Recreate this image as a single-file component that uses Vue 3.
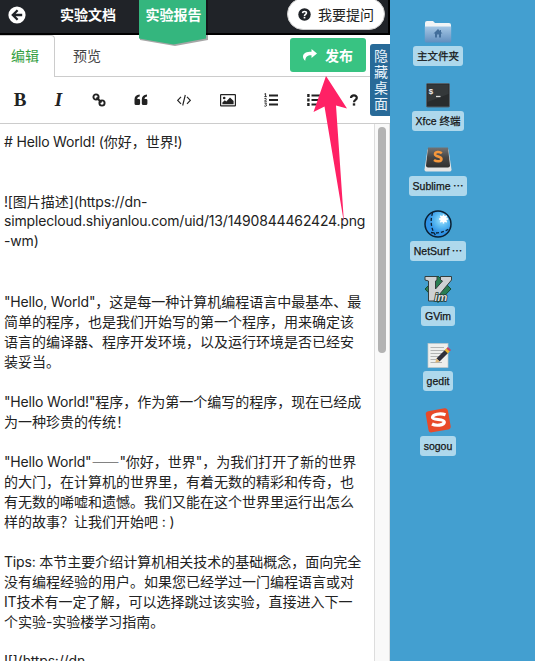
<script setup>
const lines = [
  { t: '# Hello World! (你好，世界!)' },
  { t: '' },
  { t: '' },
  { t: '![图片描述](https://dn-' },
  { t: 'simplecloud.shiyanlou.com/uid/13/1490844462424.png' },
  { t: '-wm)' },
  { t: '' },
  { t: '' },
  { t: '"Hello, World"，这是每一种计算机编程语言中最基本、最' },
  { t: '简单的程序，也是我们开始写的第一个程序，用来确定该' },
  { t: '语言的编译器、程序开发环境，以及运行环境是否已经安' },
  { t: '装妥当。' },
  { t: '' },
  { t: '"Hello World!"程序，作为第一个编写的程序，现在已经成' },
  { t: '为一种珍贵的传统！' },
  { t: '' },
  { t: '"Hello World"——"你好，世界"，为我们打开了新的世界' },
  { t: '的大门，在计算机的世界里，有着无数的精彩和传奇，也' },
  { t: '有无数的唏嘘和遗憾。我们又能在这个世界里运行出怎么' },
  { t: '样的故事？让我们开始吧 : )' },
  { t: '' },
  { t: 'Tips: 本节主要介绍计算机相关技术的基础概念，面向完全' },
  { t: '没有编程经验的用户。如果您已经学过一门编程语言或对' },
  { t: 'IT技术有一定了解，可以选择跳过该实验，直接进入下一' },
  { t: '个实验-实验楼学习指南。' },
  { t: '' },
  { t: '![](https://dn-' },
]
// Latin and CJK runs are tracked separately
for (const l of lines) {
  l.runs = l.t.match(/[\x00-\x7f]+|—+|[^\x00-\x7f—]+/g) || []
}
const runClass = (s) => (s.charCodeAt(0) < 128 ? 'en' : s[0] === '—' ? 'dash' : 'zh')
const apps = [
  { id: 'folder', label: '主文件夹' },
  { id: 'term', label: 'Xfce 终端' },
  { id: 'sublime', label: 'Sublime', more: true },
  { id: 'netsurf', label: 'NetSurf', more: true },
  { id: 'gvim', label: 'GVim' },
  { id: 'gedit', label: 'gedit' },
  { id: 'sogou', label: 'sogou' },
]
</script>

<template>
  <div class="screen" lang="zh-CN">
    <section class="panel">
      <header class="top">
        <svg class="back" viewBox="0 0 18 18" width="18" height="18">
          <circle cx="9" cy="9" r="8.6" fill="#fff" />
          <path d="M9.6 4.2 4.8 9l4.8 4.8M5.2 9h9" fill="none" stroke="#202328" stroke-width="2.3" />
        </svg>
        <span class="doc">实验文档</span>
        <div class="report">
          <svg class="ribbon" viewBox="0 0 72 50" width="72" height="50">
            <path d="M1 0H69V40L36 46 1 40Z" fill="#000" opacity=".35" />
            <path d="M0 0H67V38.5L34.500 44.500 0 38.500Z" fill="#34b67e" />
          </svg>
          <span>实验报告</span>
        </div>
        <button class="ask">
          <svg viewBox="0 0 14 14" width="13" height="13">
            <circle cx="7" cy="7" r="6.7" fill="#202328" />
            <path d="M4.900 5.500C5 3.200 9.100 3.200 9.100 5.500 9.100 6.900 7 6.900 7 8.500" fill="none" stroke="#fff" stroke-width="1.700" />
            <rect x="6.100" y="9.500" width="1.800" height="1.700" fill="#fff" />
          </svg>
          <span>我要提问</span>
        </button>
      </header>

      <nav class="tabs">
        <div class="tab on">编辑</div>
        <div class="tab">预览</div>
        <button class="publish">
          <svg viewBox="0 0 14 12" width="14" height="12">
            <path d="M8.500 0 14 4.500 8.500 9V6.300C4.500 6.200 2.500 7.500 2.300 11.800 .8 10.500 0 9 0 7.400 .2 4 3.500 2.700 8.500 2.700Z" fill="#fff" />
          </svg>
          <span>发布</span>
        </button>
      </nav>

      <div class="tools">
        <b class="serif">B</b>
        <i class="serif">I</i>
        <svg viewBox="0 0 14 14">
          <g fill="none" stroke="#222" stroke-width="1.900">
            <circle cx="4" cy="4" r="2.600" />
            <circle cx="10" cy="10" r="2.600" />
            <path d="M4.500 4.500 9.500 9.500" />
          </g>
        </svg>
        <svg viewBox="0 0 14 14">
          <path d="M.5 6.500C.5 3.500 2.200 1.800 5.700 1.600V3.500C4.300 3.600 3.300 4.300 3.200 6H4.800Q6.100 6 6.100 7.300V10.500Q6.100 12 4.600 12H2Q.5 12 .5 10.500Z" fill="#222" />
          <path d="M7.800 6.500C7.800 3.500 9.500 1.800 13 1.600V3.500C11.600 3.600 10.600 4.300 10.500 6H12.100Q13.400 6 13.400 7.300V10.500Q13.400 12 11.900 12H9.300Q7.800 12 7.800 10.500Z" fill="#222" />
        </svg>
        <svg viewBox="0 0 14 14">
          <path d="M4 3.800.7 7.300 4 10.800M10 3.800 13.300 7.300 10 10.800M8.300 2 5.700 12.500" fill="none" stroke="#222" stroke-width="1.150" />
        </svg>
        <svg viewBox="0 0 16 14" class="wide">
          <rect x=".6" y="1.600" width="14.800" height="11.300" rx=".5" fill="none" stroke="#222" stroke-width="1.200" />
          <circle cx="4.200" cy="5" r="1.300" fill="#222" />
          <path d="M2.400 11.200V9.500L4.800 7.200 6.300 8.600 10 4.600 13.600 8.100V11.200Z" fill="#222" />
        </svg>
        <svg viewBox="0 0 14 14">
          <path d="M5 2.500H14M5 7H14M5 11.500H14" stroke="#222" stroke-width="1.800" />
          <path d="M.4 1.100 1.600.4V3.600M.3 3.600H2.800M.4 5.600Q2.600 4.800 2.300 6.300L.5 8.200H2.900M.4 10H2.500L1.500 11.300Q3 11.500 2.400 12.800 1.500 13.800.3 12.900" fill="none" stroke="#222" stroke-width=".9" />
        </svg>
        <svg viewBox="0 0 14 14">
          <path d="M4.500 2.500H14M4.500 7H14M4.500 11.500H14" stroke="#222" stroke-width="1.800" />
          <path d="M1.400 1.100V3.900M1.400 5.600V8.400M1.400 10.100V12.900" stroke="#222" stroke-width="2.400" />
        </svg>
        <svg viewBox="0 0 14 14">
          <path d="M4 5C4.200 1.500 10 1.700 9.800 4.900 9.700 7 7 6.700 7 9.300" fill="none" stroke="#222" stroke-width="2.200" />
          <rect x="5.800" y="10.300" width="2.400" height="2.300" fill="#222" />
        </svg>
      </div>

      <div class="editor">
        <div class="text">
          <div v-for="(l, i) in lines" :key="i" class="line"><span v-for="(r, j) in l.runs" :key="j" :class="runClass(r)">{{ r }}</span></div>
        </div>
        <div class="track"><div class="thumb"></div></div>
      </div>
      <div class="hide">隐藏桌面</div>
    </section>

    <aside class="desktop">
      <div v-for="a in apps" :key="a.id" class="app">
        <div class="icon">
          <svg v-if="a.id === 'folder'" viewBox="0 0 28 28">
            <path d="M1 20V8Q1 6 3 6H9L11 8H25Q27 8 27 10V20Z" fill="#f1f4f6" />
            <path d="M.8 11.500H27.200V26Q27.200 27.500 25.700 27.500H2.300Q.8 27.500.8 26Z" fill="url(#fg)" />
            <path d="M14 14 9.500 18.500H11V22.500H13V19.500H15V22.500H17V18.500H18.500L17 17V15H15.900V16Z" fill="#426e9b" />
            <defs><linearGradient id="fg" x2="0" y2="1"><stop stop-color="#a5c7e5" /><stop offset="1" stop-color="#628fbf" /></linearGradient></defs>
          </svg>
          <svg v-else-if="a.id === 'term'" viewBox="0 0 28 28">
            <rect x="2.500" y="3.500" width="23" height="23.500" rx="1" fill="#282b2d" stroke="#53616b" />
            <path d="M3.500 4.500H24.500V14L3.500 22Z" fill="#34383a" />
            <text x="4.500" y="14" class="mono">$</text>
            <path d="M12 16.500H16.500" stroke="#ddd" stroke-width="1.300" />
          </svg>
          <svg v-else-if="a.id === 'sublime'" viewBox="0 0 28 28">
            <path d="M3.500 4.500H24.500L27.500 24.500Q27.500 26.500 26 26.500H2Q.5 26.500.5 24.500Z" fill="#e3e4e4" />
            <path d="M4 2.500H24L26 20.500Q26 22.500 24 22.500H4Q2 22.500 2 20.500Z" fill="url(#sg)" />
            <path d="M17.800 8.300C15.500 6.300 10.800 6.800 11 9.300 11.200 11.800 17.500 11.300 17.500 13.900 17.500 17 12.700 16.900 10 15" fill="none" stroke="#f5973b" stroke-width="2.500" />
            <defs><linearGradient id="sg" x2="0" y2="1"><stop stop-color="#737373" /><stop offset=".5" stop-color="#454545" /><stop offset="1" stop-color="#303030" /></linearGradient></defs>
          </svg>
          <svg v-else-if="a.id === 'netsurf'" viewBox="0 0 28 28">
            <circle cx="14" cy="14" r="13" fill="url(#ng)" stroke="#0b2033" stroke-width="1.500" />
            <path d="M8.500 3C6 11 7 19 12 26M7 22.500C13 24 21 22 26 18" fill="none" stroke="#0b2033" stroke-width="1.300" stroke-dasharray="3 2" />
            <path d="M19.500 4.500V13.500M15 9H24M16.300 5.800 22.700 12.200M22.700 5.800 16.300 12.200" stroke="#fff" stroke-width="1.500" />
            <circle cx="19.500" cy="9" r="3.200" fill="#fff" />
            <defs><radialGradient id="ng" cx=".65" cy=".35"><stop stop-color="#a6e3ff" /><stop offset=".5" stop-color="#5dbcf2" /><stop offset="1" stop-color="#2f92e6" /></radialGradient></defs>
          </svg>
          <svg v-else-if="a.id === 'gvim'" viewBox="0 0 28 28">
            <path d="M14 1 27 14 14 27.500 1 14Z" fill="#297d52" stroke="#174d37" />
            <path d="M1 1.500H13V5L11.500 6V14L18.500 6 16.500 5V1.500H27.500V5L10 26H4.500V6L1 5Z" fill="#cfd1d3" stroke="#343e3d" />
            <text x="10.500" y="25.500" class="vim">im</text>
          </svg>
          <svg v-else-if="a.id === 'gedit'" viewBox="0 0 28 28">
            <rect x="4" y="3.500" width="20" height="24" fill="#eeefed" stroke="#c2c8c8" stroke-width=".7" />
            <path d="M6.500 7.500H20M6.500 10.500H20M6.500 13.500H18M6.500 16.500H15M6.500 19.500H13M6.500 22.500H18" stroke="#b2b4b3" stroke-width="1" />
            <path d="M14 20 23 11" stroke="#30303a" stroke-width="4.500" />
            <path d="M12.300 18.200 15.800 21.800 11.300 22.800Z" fill="#dfb879" />
            <path d="M22.200 11.800 24.500 9.500" stroke="#ebb832" stroke-width="4.500" />
            <path d="M24 10 25.500 8.500" stroke="#c1446c" stroke-width="4.500" />
          </svg>
          <svg v-else viewBox="0 0 28 28">
            <rect x="3" y="4.500" width="22.500" height="21.500" rx="3" transform="rotate(-10 14.500 15.500)" fill="#e84a29" />
            <path d="M21.500 9.800C16 7.800 8.500 9.500 8.500 12.500 8.500 15.500 20.500 13.500 20.300 17 20 20.300 12 21.200 8 19" fill="none" stroke="#fff" stroke-width="3.200" />
          </svg>
        </div>
        <span class="label">{{ a.label }}<span v-if="a.more" class="more"> ⋯</span></span>
      </div>
    </aside>

    <svg class="arrow" viewBox="0 0 34 148" width="34" height="148">
      <path d="M13 0 34 32.500 23 29.500 31 147 11.500 30.500.5 36Z" fill="#ff2165" />
    </svg>
  </div>
</template>

<style>
body {
  overflow: hidden;
}
</style>

<style scoped>
.screen {
  position: relative;
  display: flex;
  width: 535px;
  height: 661px;
  overflow: hidden;
  font-family: Inter, "Noto Sans CJK SC", sans-serif;
  font-size: 14px;
  color: #222;
}
.panel {
  position: relative;
  display: flex;
  flex-direction: column;
  width: 390px;
  background: #fff;
}
.top {
  display: flex;
  box-sizing: border-box;
  flex: none;
  height: 35px;
  background: #202328;
  border-bottom: 2px solid #000;
  border-right: 2px solid #000;
  color: #fff;
}
.back {
  margin: 5.500px 0 0 8px;
}
.doc,
.report {
  font-weight: 700;
  line-height: 29px;
}
.doc {
  margin-left: 34px;
  width: 79px;
}
.report {
  position: relative;
  width: 67px;
  text-align: center;
}
.ribbon {
  position: absolute;
  left: 0;
  top: 0;
  z-index: 1;
}
.report span {
  position: relative;
  z-index: 2;
  left: 1px;
}
button {
  display: flex;
  align-items: center;
  padding: 0;
  border: 0;
  font: inherit;
}
.ask {
  box-sizing: border-box;
  width: 98px;
  height: 32px;
  margin: -2px 0 0 81px;
  padding-left: 10px;
  gap: 7px;
  border: 1px solid #ccc;
  border-radius: 16px;
  background: #fff;
  color: #222;
}
.tabs {
  display: flex;
  box-sizing: border-box;
  flex: none;
  height: 42px;
  border-bottom: 1px solid #ccc;
}
.tab {
  box-sizing: border-box;
  height: 42px;
  line-height: 41px;
  color: #444;
  padding-left: 18px;
}
.tab.on {
  width: 55px;
  padding-left: 11px;
  border-top: 1px solid #ccc;
  border-right: 1px solid #ccc;
  border-radius: 0 4px 0 0;
  background: #fff;
  color: #35a043;
  line-height: 40px;
}
.publish {
  width: 76px;
  height: 34px;
  margin: 3px 24px 0 auto;
  padding-left: 13px;
  box-sizing: border-box;
  gap: 8px;
  border-radius: 3px;
  background: #38c382;
  color: #fff;
  font-weight: 700;
}
.tools {
  display: grid;
  grid-template-columns: 40px 37px 43px 41px 45px 43px 43px 43px 37px;
  box-sizing: border-box;
  flex: none;
  height: 47px;
  align-items: center;
  justify-items: center;
  border-bottom: 1px solid #ccc;
}
.tools svg {
  width: 14px;
  height: 14px;
}
.tools svg.wide {
  width: 16px;
}
.serif {
  font-family: "Liberation Serif", serif;
  font-size: 19px;
}
i.serif {
  font-weight: 700;
}
.editor {
  display: flex;
  flex: 1;
  min-height: 0;
}
.text {
  flex: 1;
  padding: 7px 0 0 4px;
  overflow: hidden;
  white-space: pre;
}
.line {
  height: 20px;
  line-height: 20px;
}
.en {
  letter-spacing: -0.17px;
}
.zh,
.dash {
  font-family: "Noto Sans CJK SC", sans-serif;
}
.track {
  box-sizing: border-box;
  width: 16px;
  padding: 3px 3px 0;
  border-left: 1px solid #ddd;
  border-right: 1px solid #ddd;
  background: #f9f9f9;
}
.thumb {
  width: 8px;
  height: 226px;
  border-radius: 4px;
  background: #b3b3b3;
}
.hide {
  position: absolute;
  left: 370px;
  top: 44px;
  box-sizing: border-box;
  width: 20px;
  height: 72px;
  padding: 4px 2px 0 4px;
  border-radius: 3px 0 0 3px;
  background: #286a98;
  color: #eaf4fb;
  line-height: 16px;
  overflow-wrap: anywhere;
}
.desktop {
  display: flex;
  flex: 1;
  flex-direction: column;
  box-sizing: border-box;
  padding-top: 15px;
  background: #439fd0;
}
.app {
  display: flex;
  flex-direction: column;
  align-items: center;
  gap: 3px;
  width: 96px;
  height: 65px;
}
.icon,
.icon svg {
  display: block;
  width: 28px;
  height: 28px;
}
.label {
  height: 20px;
  padding: 0 4px;
  border-radius: 3px;
  background: #aed8ec;
  color: #151515;
  font-family: "Liberation Sans", "Noto Sans CJK SC", sans-serif;
  font-size: 10.500px;
  line-height: 20px;
  white-space: nowrap;
  -webkit-text-stroke: 0.25px #151515;
}
.more {
  font-family: "Noto Sans CJK SC", sans-serif;
}
.mono {
  font: 700 8px "Liberation Mono", monospace;
  fill: #eee;
}
.vim {
  font: italic 700 11px "Liberation Sans", sans-serif;
  fill: #ddd;
  stroke: #243a32;
  stroke-width: 1.500px;
  paint-order: stroke;
}
.arrow {
  position: absolute;
  left: 313px;
  top: 76px;
}
</style>
